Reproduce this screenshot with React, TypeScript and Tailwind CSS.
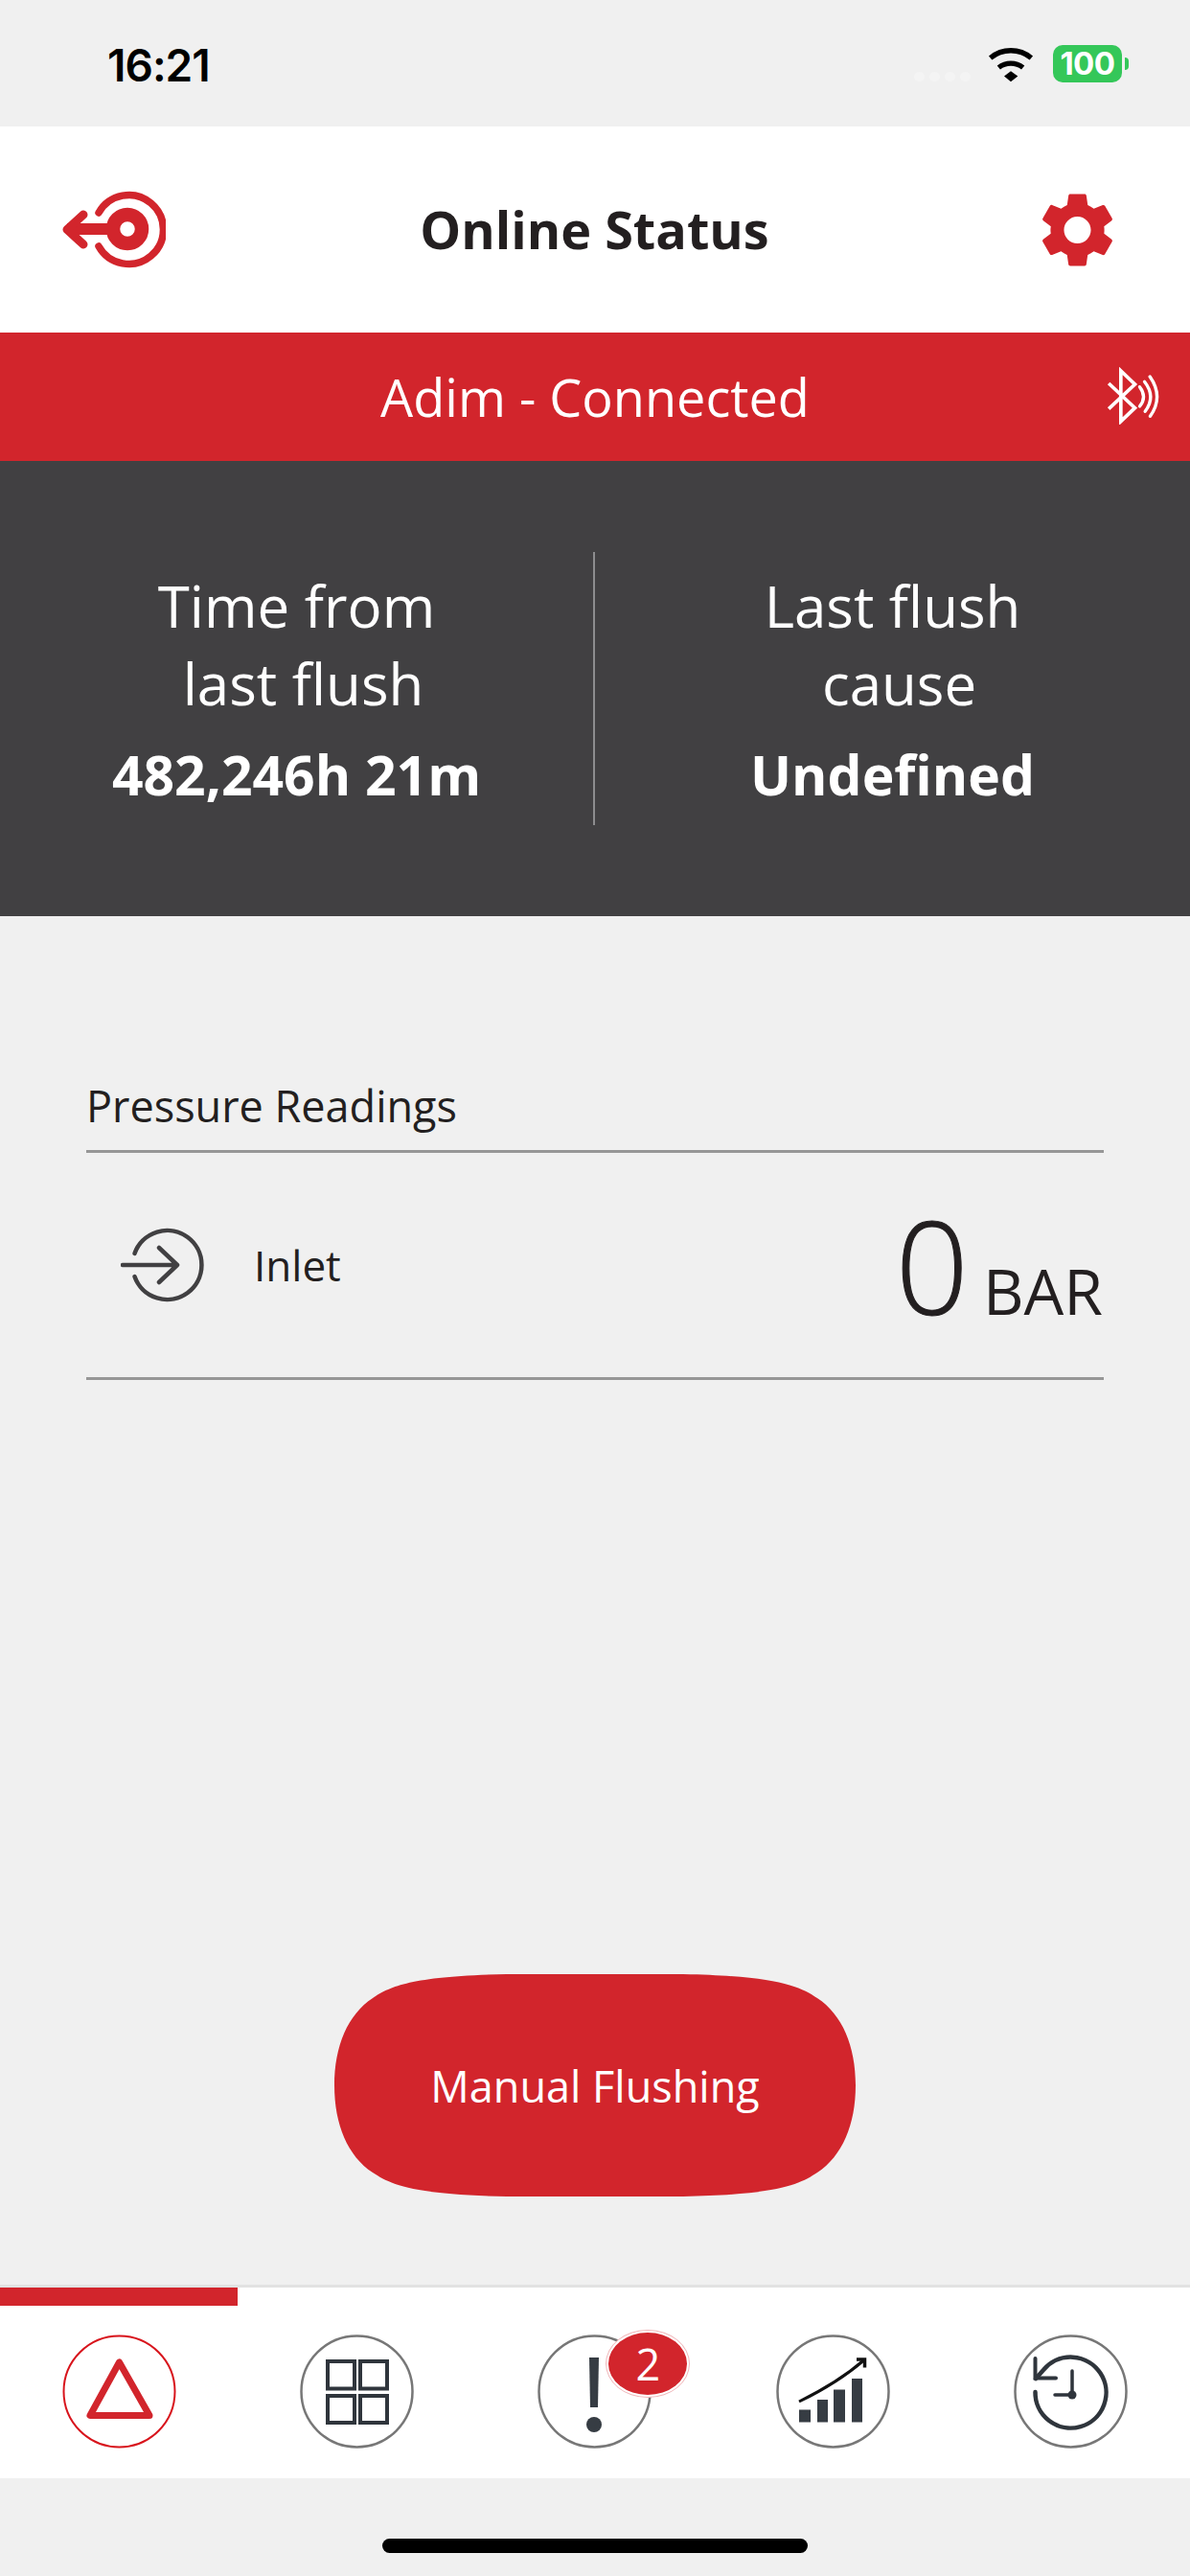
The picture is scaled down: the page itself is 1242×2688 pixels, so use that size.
import React from "react";

const RED = "#d2252c";
const INK = "#2f353c";

function Ring({ color = "#777777", width = 2.5, children }: { color?: string; width?: number; children?: React.ReactNode }) {
  return (
    <svg width="119" height="119" viewBox="0 0 119 119" className="block">
      <circle cx="59.5" cy="59.5" r="58" fill="none" stroke={color} strokeWidth={width} />
      {children}
    </svg>
  );
}

export default function App() {
  return (
    <div className="w-[1242px] h-[2688px] flex flex-col bg-[#f0f0f0] text-[#231f20] font-['Open_Sans',sans-serif] overflow-hidden">
      {/* status bar */}
      <div className="h-[132px] shrink-0 flex items-start justify-between pt-[43px] pl-[112px] pr-[64px]">
        <span className="text-[46px] leading-[50px] font-semibold text-black font-['Inter',sans-serif] tracking-[-1px]">16:21</span>
        <div className="flex items-start pt-[5px]">
          <div className="flex gap-[5px] mt-[27px] mr-[18px]">
            <span className="w-[11px] h-[10px] rounded-full bg-[#f4f4f4]" />
            <span className="w-[11px] h-[10px] rounded-full bg-[#f4f4f4]" />
            <span className="w-[11px] h-[10px] rounded-full bg-[#f4f4f4]" />
            <span className="w-[11px] h-[10px] rounded-full bg-[#f4f4f4]" />
          </div>
          <svg width="48" height="37" viewBox="4 88 144 108" className="mt-[1px]">
            <path d="M12 121 A100 100 0 0 1 140 121" fill="none" stroke="#000" strokeWidth="16" />
            <path d="M38 151 A62 62 0 0 1 114 151" fill="none" stroke="#000" strokeWidth="16" />
            <path d="M55 178 L76 162 L98 178 L76 195 Z" fill="#000" />
          </svg>
          <div className="ml-[20px] w-[72px] h-[39px] -mt-[1px] rounded-[10px] bg-[#34c759] flex items-center justify-center text-white text-[33px] leading-none font-bold font-['Inter',sans-serif] tracking-[-0.5px]">100</div>
          <span className="ml-[3px] mt-[12px] w-[4px] h-[13px] rounded-r-full bg-[#34c759]" />
        </div>
      </div>

      {/* header */}
      <div className="h-[215px] shrink-0 bg-white grid grid-cols-[1fr_auto_1fr] items-center pl-[63px] pr-[80px]">
        <svg width="110" height="82" viewBox="63 199 110 82" className="block">
          <path d="M103 222 A36 36 0 1 1 103 257" fill="none" stroke={RED} strokeWidth="7.5" strokeLinecap="round" />
          <circle cx="133" cy="239" r="15" fill="none" stroke={RED} strokeWidth="14.5" />
          <path d="M70 239 H115" stroke={RED} strokeWidth="12" />
          <path d="M87 224 L70 239.5 L87 255" fill="none" stroke={RED} strokeWidth="9" strokeLinecap="round" strokeLinejoin="round" />
        </svg>
        <h1 className="text-[54px] leading-none font-bold text-[#231f20] -mt-[2px] ml-[16px]">Online Status</h1>
        <svg width="75" height="78" viewBox="2.6 2 18.8 20" className="block justify-self-end">
          <path
            fill={RED}
            d="M19.14 12.94c.04-.3.06-.61.06-.94 0-.32-.02-.64-.07-.94l2.03-1.58c.18-.14.23-.41.12-.61l-1.92-3.32c-.12-.22-.37-.29-.59-.22l-2.39.96c-.5-.38-1.03-.7-1.62-.94l-.36-2.54c-.04-.24-.24-.41-.48-.41h-3.84c-.24 0-.43.17-.47.41l-.36 2.54c-.59.24-1.13.57-1.62.94l-2.39-.96c-.22-.08-.47 0-.59.22L2.74 8.87c-.12.21-.08.47.12.61l2.03 1.58c-.05.3-.09.63-.09.94s.02.64.07.94l-2.03 1.58c-.18.14-.23.41-.12.61l1.92 3.32c.12.22.37.29.59.22l2.39-.96c.5.38 1.03.7 1.62.94l.36 2.54c.05.24.24.41.48.41h3.84c.24 0 .44-.17.47-.41l.36-2.54c.59-.24 1.13-.56 1.62-.94l2.39.96c.22.08.47 0 .59-.22l1.92-3.32c.12-.22.07-.47-.12-.61l-2.01-1.58zM12 15.6c-1.98 0-3.6-1.62-3.6-3.6s1.62-3.6 3.6-3.6 3.6 1.62 3.6 3.6-1.62 3.6-3.6 3.6z"
          />
        </svg>
      </div>

      {/* connection banner */}
      <div className="h-[134px] shrink-0 bg-[#d2252c] grid grid-cols-[1fr_auto_1fr] items-center text-white">
        <span />
        <span className="text-[54px] leading-none font-normal">Adim - Connected</span>
        <svg width="57" height="60" viewBox="285 610 170 180" className="justify-self-end mr-[31px] -mt-[2px]">
          <path d="M294 661 L376 738 L332 780 L332 622 L376 664 L294 741" fill="none" stroke="#fff" strokeWidth="11" />
          <path d="M391 672 Q415 703 391 733" fill="none" stroke="#fff" strokeWidth="10" strokeLinecap="round" />
          <path d="M406 656 Q443 703 408 749" fill="none" stroke="#fff" strokeWidth="10" strokeLinecap="round" />
          <path d="M423 640 Q467 703 424 764" fill="none" stroke="#fff" strokeWidth="10" strokeLinecap="round" />
        </svg>
      </div>

      {/* last flush summary */}
      <div className="h-[475px] shrink-0 bg-[#414042] grid grid-cols-2 items-center text-white">
        <div className="border-r-2 border-[#8d8d8f] h-[285px] flex flex-col items-center justify-center">
          <div className="text-[60px] leading-[81px] font-normal text-center">
            <div>Time from</div>
            <div className="pl-[14px]">last flush</div>
          </div>
          <div className="text-[57px] leading-[74px] font-bold mt-[17px]">482,246h 21m</div>
        </div>
        <div className="h-[285px] flex flex-col items-center justify-center">
          <div className="text-[60px] leading-[81px] font-normal text-center">
            <div>Last flush</div>
            <div className="pl-[14px]">cause</div>
          </div>
          <div className="text-[57px] leading-[74px] font-bold mt-[17px]">Undefined</div>
        </div>
      </div>

      {/* body */}
      <div className="flex-1 flex flex-col px-[90px] pt-[168px]">
        <div className="text-[45px] leading-[60px] border-b-[3px] border-[#969696] pb-[16px]">Pressure Readings</div>
        <div className="h-[237px] border-b-[3px] border-[#969696] flex items-center pl-[36px] pr-[1px]">
          <svg width="100" height="80" viewBox="125 1280 100 80" className="block">
            <path d="M139.5 1308 A36 36 0 1 1 139.5 1332" fill="none" stroke="#414042" strokeWidth="4.5" strokeLinecap="round" />
            <path d="M127 1320 H184 M165 1302 L184 1320 L165 1338" fill="none" stroke="#414042" strokeWidth="4.5" strokeLinecap="round" strokeLinejoin="round" />
          </svg>
          <span className="ml-[39px] text-[44px] leading-none">Inlet</span>
          <span className="ml-auto text-[134px] leading-none font-light [-webkit-text-stroke:1px_#231f20]">0</span>
          <span className="ml-[15px] mt-[52px] text-[66px] leading-none font-normal">BAR</span>
        </div>
        <div className="flex-1 flex items-end justify-center pb-[92px]">
          <button className="w-[544px] h-[232px] bg-[#d2252c] text-white text-[45px] leading-none font-normal [clip-path:path('M0_116C0_75_14_42_40_25C58_13_80_2_180_0H364C464_2_486_13_504_25C530_42_544_75_544_116C544_157_530_190_504_207C486_219_464_230_364_232H180C80_230_58_219_40_207C14_190_0_157_0_116Z')]">Manual Flushing</button>
        </div>
      </div>

      {/* tab bar */}
      <div className="shrink-0 border-t-[3px] border-[#e2e2e2] bg-white h-[202px]">
        <div className="w-[248px] h-[19px] bg-[#d2252c]" />
        <div className="grid grid-cols-5 pt-[30px]">
          <div className="flex justify-center">
            <Ring color="#d8141c" width={2}>
              <path d="M59.5 29 L29 84.5 H91 Z" fill="none" stroke={RED} strokeWidth="7" strokeLinejoin="round" />
            </Ring>
          </div>
          <div className="flex justify-center">
            <Ring>
              <g fill="none" stroke={INK} strokeWidth="4">
                <rect x="29" y="28" width="28" height="28.5" />
                <rect x="63" y="28" width="28" height="28.5" />
                <rect x="29" y="64" width="28" height="28" />
                <rect x="63" y="64" width="28" height="28" />
              </g>
            </Ring>
          </div>
          <div className="flex justify-center">
            <div className="relative">
              <Ring>
                <path d="M54 24 H64 L63 76 H55 Z" fill="#363c43" />
                <circle cx="59" cy="94" r="8" fill="#363c43" />
              </Ring>
              <div className="absolute left-[71px] -top-[5px] w-[88px] h-[71px] rounded-[44px/36px] bg-white border border-[#f0b8bb] p-[2px]">
                <div className="w-full h-full rounded-[42px/33px] bg-[#d2252c] flex items-center justify-center text-white text-[45px] leading-none font-normal">2</div>
              </div>
            </div>
          </div>
          <div className="flex justify-center">
            <Ring>
              <g fill="#363c43">
                <rect x="24" y="78.5" width="12" height="13" />
                <rect x="43" y="68" width="11" height="23.5" />
                <rect x="60" y="57.5" width="12" height="34" />
                <rect x="79" y="46" width="11" height="45.5" />
              </g>
              <path d="M24 70 Q65 50 92 26.5" fill="none" stroke="#111" strokeWidth="3" />
              <path d="M84 26 H92.5 V34.5" fill="none" stroke="#111" strokeWidth="3.5" />
            </Ring>
          </div>
          <div className="flex justify-center">
            <Ring>
              <path d="M22.5 60 A37 37 0 1 0 31 37 L23 46" fill="none" stroke={INK} strokeWidth="4.5" strokeLinecap="round" />
              <path d="M22.5 25 V45.5 H44" fill="none" stroke={INK} strokeWidth="4" strokeLinecap="round" />
              <path d="M61 38 V63 H43" fill="none" stroke={INK} strokeWidth="3.5" strokeLinecap="round" />
              <circle cx="61" cy="63" r="4.5" fill={INK} />
            </Ring>
          </div>
        </div>
      </div>

      {/* home indicator */}
      <div className="h-[102px] shrink-0 pt-[63px] flex justify-center">
        <div className="w-[444px] h-[15px] rounded-full bg-black" />
      </div>
    </div>
  );
}
